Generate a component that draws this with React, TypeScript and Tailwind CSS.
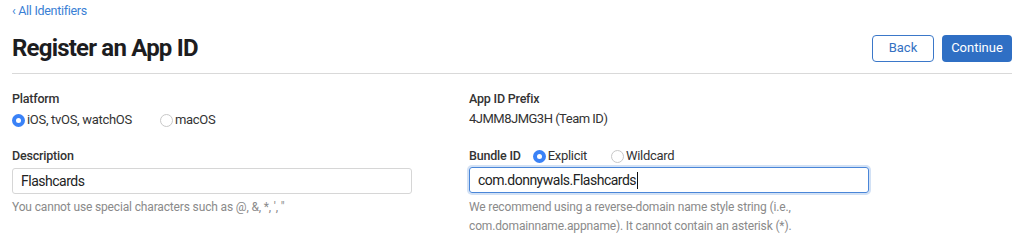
function Radio({ checked, label }: { checked?: boolean; label: string }) {
  return (
    <label className="flex h-[18px] items-center">
      <span
        className={
          checked
            ? "flex h-[13px] w-[13px] items-center justify-center rounded-full bg-[#3a82f7]"
            : "h-[13px] w-[13px] rounded-full border border-[#c8c8c8] bg-white"
        }
      >
        {checked && <span className="h-[5px] w-[5px] rounded-full bg-white" />}
      </span>
      <span className="ml-[2px] text-[13px] tracking-[-0.3px] text-[#333]">{label}</span>
    </label>
  );
}

export default function App() {
  return (
    <div className="h-[250px] w-[1024px] bg-white px-3 font-['Roboto',sans-serif] text-[#1d1d1f]">
      <a className="block pt-[3px] text-[12.5px] leading-4 tracking-[-0.3px] text-[#3a7fd5]">‹ All Identifiers</a>
      <div className="mt-[15px] flex items-center justify-between">
        <h1 className="text-[24px] font-bold leading-7 tracking-[-0.8px]">Register an App ID</h1>
        <div className="flex gap-2">
          <button className="h-[27px] w-[62px] rounded-[4px] border border-[#3b78c9] bg-white text-[13px] text-[#3470c2]">
            Back
          </button>
          <button className="h-[27px] w-[70px] rounded-[4px] bg-[#2f6fc4] text-[13px] text-white">
            Continue
          </button>
        </div>
      </div>
      <div className="mt-[11px] h-px bg-[#d9d9d9]" />

      <div className="mt-[17px] grid grid-cols-[457px_1fr]">
        <div>
          <p className="text-[12.5px] font-medium leading-4 tracking-[-0.2px] text-[#333]">Platform</p>
          <div className="mt-[4px] flex gap-[28px]">
            <Radio checked label="iOS, tvOS, watchOS" />
            <Radio label="macOS" />
          </div>
          <p className="mt-[19px] text-[12.5px] font-medium leading-4 tracking-[-0.2px] text-[#333]">Description</p>
          <div className="mt-[4px] flex h-[26px] w-[400px] items-center rounded-[3px] border border-[#d6d6d6] px-2 text-[14px] tracking-[-0.5px] text-[#222]">
            Flashcards
          </div>
          <p className="mt-[4px] text-[12px] leading-[19px] tracking-[-0.15px] text-[#8a8a8a]">
            You cannot use special characters such as @, &amp;, *, ', "
          </p>
        </div>
        <div>
          <p className="text-[12.5px] font-medium leading-4 tracking-[-0.2px] text-[#333]">App ID Prefix</p>
          <p className="mt-[2px] text-[13px] leading-5 tracking-[-0.5px] text-[#333]">4JMM8JMG3H (Team ID)</p>
          <div className="mt-[18px] flex h-[18px] items-center">
            <p className="mr-[12px] text-[12.5px] font-medium leading-4 tracking-[-0.2px] text-[#333]">Bundle ID</p>
            <div className="flex gap-[24px]">
              <Radio checked label="Explicit" />
              <Radio label="Wildcard" />
            </div>
          </div>
          <div className="mt-[2px] flex h-[26px] w-[400px] items-center rounded-[3px] border border-[#4a86d8] px-2 text-[14px] tracking-[-0.5px] text-[#222] shadow-[0_0_0_2px_rgba(74,134,216,0.25)]">
            com.donnywals.Flashcards
            <span className="ml-px h-[17px] w-px bg-[#111]" />
          </div>
          <p className="mt-[5px] w-[400px] text-[12px] leading-[19px] tracking-[-0.15px] text-[#8a8a8a]">
            We recommend using a reverse-domain name style string (i.e., com.domainname.appname). It cannot contain an asterisk (*).
          </p>
        </div>
      </div>
    </div>
  );
}
